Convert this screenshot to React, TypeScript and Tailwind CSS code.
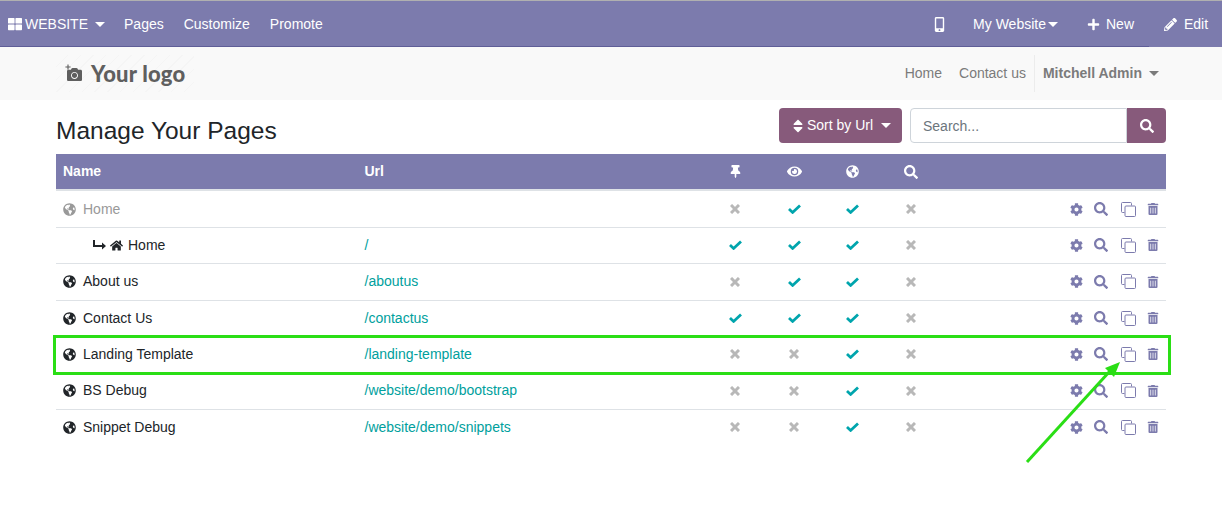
import {
  FaThLarge,
  FaMobileAlt,
  FaPlus,
  FaPencilAlt,
  FaSort,
  FaSearch,
  FaThumbtack,
  FaEye,
  FaGlobeAmericas,
  FaCog,
  FaTrashAlt,
  FaHome,
  FaCamera,
} from "react-icons/fa";

const pages = [
  { name: "Home", url: "", flags: [false, true, true, false], muted: true },
  { name: "Home", url: "/", flags: [true, true, true, false], child: true },
  { name: "About us", url: "/aboutus", flags: [false, true, true, false] },
  { name: "Contact Us", url: "/contactus", flags: [true, true, true, false] },
  { name: "Landing Template", url: "/landing-template", flags: [false, false, true, false] },
  { name: "BS Debug", url: "/website/demo/bootstrap", flags: [false, false, true, false] },
  { name: "Snippet Debug", url: "/website/demo/snippets", flags: [false, false, true, false] },
];

function Caret({ className = "" }: { className?: string }) {
  return <span className={`inline-block border-x-[5px] border-t-[5px] border-x-transparent border-t-current ${className}`} />;
}

function Flag({ on }: { on: boolean }) {
  return (
    <div className="flex justify-center">
      {on ? (
        <svg width="13" height="10" viewBox="0 0 13 10" fill="none" stroke="#00a5ad" strokeWidth="2.8">
          <path d="M1 5l3.6 3.4L12 1.4" />
        </svg>
      ) : (
        <svg width="10" height="10" viewBox="0 0 10 10" fill="none" stroke="#b8b8b8" strokeWidth="3">
          <path d="M1 1l8 8M9 1l-8 8" />
        </svg>
      )}
    </div>
  );
}

function CloneIcon() {
  return (
    <svg width="15" height="15" viewBox="0 0 15 15" fill="none" stroke="currentColor" strokeWidth="1">
      <path d="M10.5 3.5v-2a1 1 0 0 0-1-1h-8a1 1 0 0 0-1 1v8a1 1 0 0 0 1 1h2" />
      <rect x="4" y="4" width="10.5" height="10.5" rx="1" />
    </svg>
  );
}

export default function App() {
  return (
    <div className="relative h-[510px] w-[1222px] overflow-hidden bg-white font-['Liberation_Sans',sans-serif] text-[14px] text-[#212529]">
      {/* Top bar */}
      <div className="h-px bg-[#b0b0b0]" />
      <div className="flex h-[46px] items-center bg-[#7c7bad] text-white">
        <div className="flex h-full flex-1 items-center border-b border-[#5f5e97] pl-2 pt-px">
          <FaThLarge size={14} />
          <span className="ml-[3px]">WEBSITE</span>
          <Caret className="ml-[7px]" />
          <span className="ml-[19px]">Pages</span>
          <span className="ml-5">Customize</span>
          <span className="ml-5">Promote</span>
          <div className="ml-auto flex items-center">
            <FaMobileAlt size={15} />
            <span className="ml-[26px]">My Website</span>
            <Caret className="ml-[2px]" />
            <FaPlus className="ml-[29px]" size={13} />
            <span className="ml-[6px] mr-[15px]">New</span>
          </div>
        </div>
        <div className="flex h-full w-[73px] items-center pl-[15px] pt-px">
          <FaPencilAlt size={13} />
          <span className="ml-[7px]">Edit</span>
        </div>
      </div>

      {/* Site header */}
      <div className="flex h-[53px] items-center bg-[#f9f9f9] pl-[56px] pr-[63px]">
        <div className="flex h-[37px] w-[138px] items-center pl-[10px] text-[#5f5f5f] bg-[repeating-linear-gradient(135deg,#f9f9f9_0px,#f9f9f9_8px,#f5f5f5_8px,#f5f5f5_9px)]">
          <div className="relative">
            <FaCamera className="ml-px mt-[2px]" size={15} />
            <FaPlus className="absolute -left-px -top-px" size={6} />
          </div>
          <span className="ml-[8px] pl-px font-['Lato',sans-serif] text-[22px] font-black tracking-[0.2px]">Your logo</span>
        </div>
        <div className="ml-auto flex items-center text-[#7b7b7b]">
          <span>Home</span>
          <span className="ml-[17px]">Contact us</span>
          <div className="ml-[8px] flex h-[37px] items-center border-l border-[#ececec] pl-2">
            <span className="font-bold">Mitchell Admin</span>
            <Caret className="ml-[7px]" />
          </div>
        </div>
      </div>

      {/* Title and search */}
      <div className="flex h-[54px] items-start px-[56px] pt-2">
        <h1 className="mt-[8px] text-[24.5px] leading-[30px]">Manage Your Pages</h1>
        <button className="ml-auto flex h-[35px] w-[123px] items-center rounded bg-[#875a7b] pl-[11px] text-white">
          <FaSort size={16} />
          <span className="ml-[1px]">Sort by Url</span>
          <Caret className="ml-[8px]" />
        </button>
        <div className="ml-2 flex h-[35px] w-[256px]">
          <div className="flex flex-1 items-center rounded-l border border-[#ced4da] pl-3 pt-px text-[#6c757d]">Search...</div>
          <div className="flex w-[39px] items-center justify-center rounded-r bg-[#875a7b] text-white">
            <FaSearch size={14} />
          </div>
        </div>
      </div>

      {/* Pages table */}
      <div className="mx-[56px] text-[14px]">
        <div className="grid h-[37px] grid-cols-[301.5px_348px_59px_59px_58.5px_58px_1fr] items-center border-b-2 border-[#dee2e6] bg-[#7c7bad] font-bold text-white">
          <span className="pl-[7px]">Name</span>
          <span className="pl-[7px]">Url</span>
          <div className="flex justify-center"><FaThumbtack size={13} /></div>
          <div className="flex justify-center"><FaEye size={15} /></div>
          <div className="flex justify-center"><FaGlobeAmericas size={13} /></div>
          <div className="flex justify-center"><FaSearch size={14} /></div>
          <span />
        </div>
        <div className="pt-[0.7px]">
          {pages.map((page, i) => (
            <div
              key={i}
              className="grid h-[36.33px] grid-cols-[301.5px_348px_59px_59px_58.5px_58px_1fr] items-center border-b border-[#dee2e6] pb-[0.5px] last:border-b-transparent"
            >
              <div className={`flex items-center pl-[7px] ${page.muted ? "text-[#999999]" : ""}`}>
                {page.child ? (
                  <>
                    <svg className="ml-[30px]" width="13" height="10" viewBox="0 0 13 10" fill="currentColor">
                      <path d="M0 0h2v5h7V2.5L13 6 9 9.5V7H0z" />
                    </svg>
                    <FaHome className="ml-[4px]" size={13} />
                    <span className="ml-[5px]">{page.name}</span>
                  </>
                ) : (
                  <>
                    <FaGlobeAmericas size={13} />
                    <span className="ml-[7px]">{page.name}</span>
                  </>
                )}
              </div>
              <span className="pl-[7px] text-[#00a09d]">{page.url}</span>
              {page.flags.map((on, j) => (
                <Flag key={j} on={on} />
              ))}
              <div className="flex items-center justify-end pr-[7px] text-[#7c7bad]">
                <FaCog size={13} />
                <FaSearch className="ml-[11px]" size={14} />
                <span className="ml-[13px]"><CloneIcon /></span>
                <FaTrashAlt className="ml-[11px]" size={12} />
              </div>
            </div>
          ))}
        </div>
      </div>

      {/* Green highlight annotation */}
      <div className="absolute left-[53px] top-[335px] h-[40px] w-[1118px] border-[3px] border-[#2ade15]" />
      <svg className="absolute left-0 top-0" width="1222" height="510">
        <line x1="1027" y1="462" x2="1110" y2="371" stroke="#2ade15" strokeWidth="3" />
        <polygon points="1120,362 1105,368 1114,377" fill="#2ade15" />
      </svg>
    </div>
  );
}
